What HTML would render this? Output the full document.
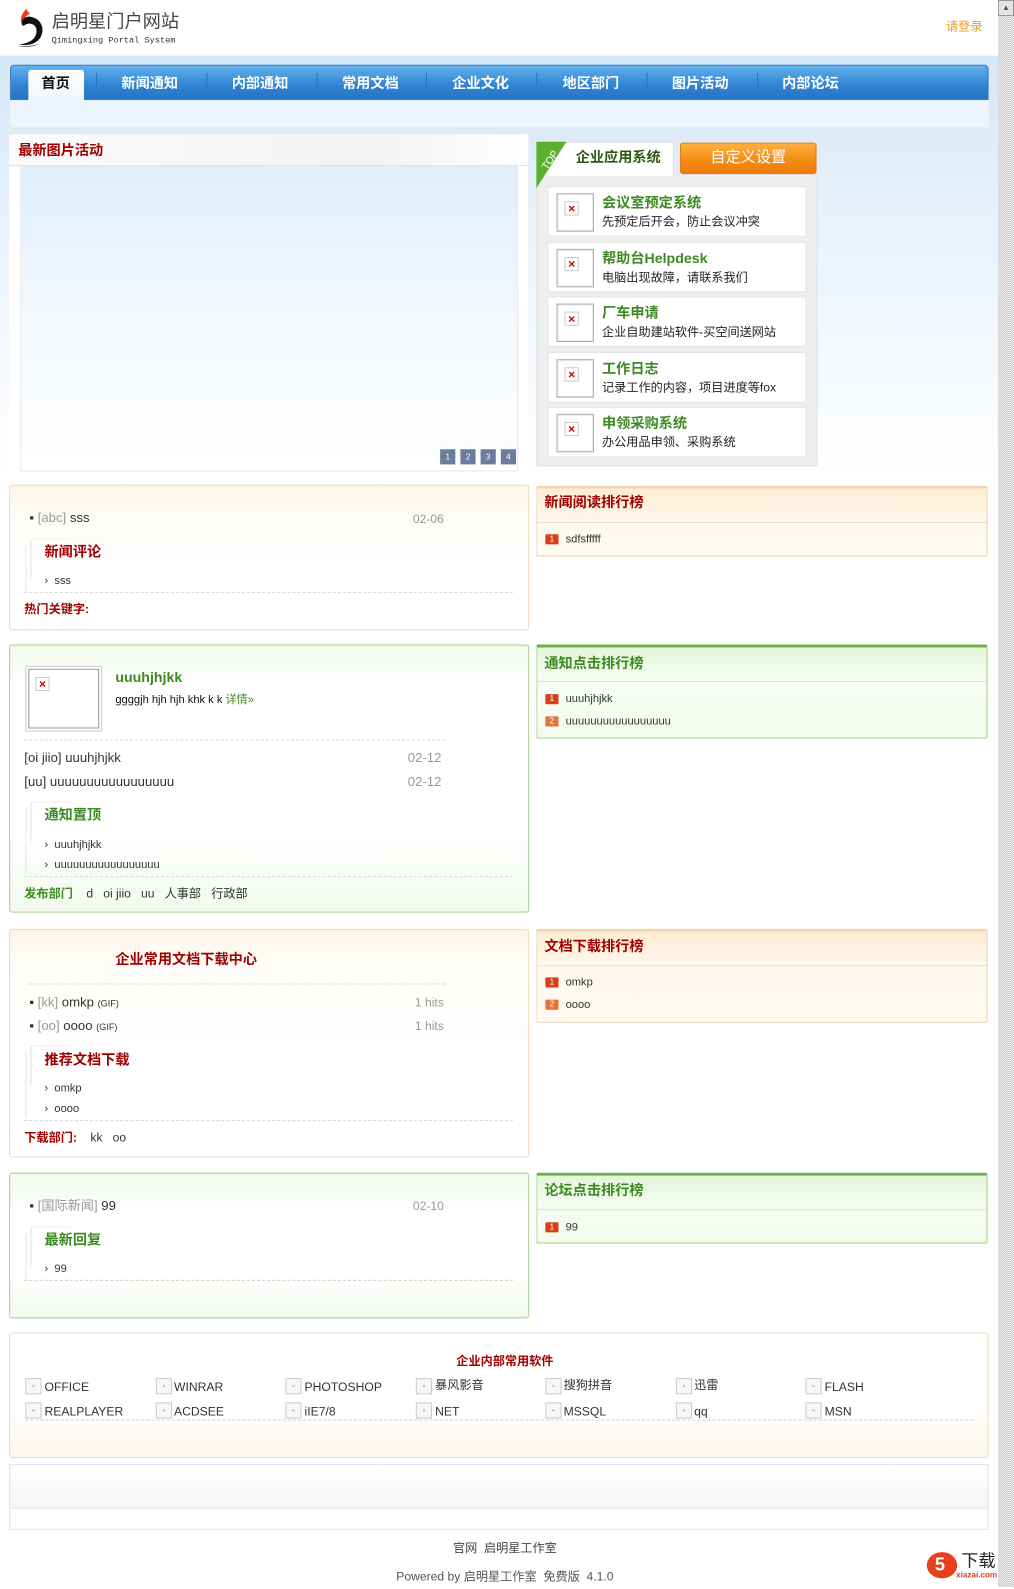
<!DOCTYPE html>
<html><head><meta charset="utf-8">
<style>
*{margin:0;padding:0;box-sizing:border-box}
body{width:1014px;height:1587px;position:relative;overflow:hidden;font-family:"Liberation Sans","Noto Sans CJK SC",sans-serif;font-size:12px;color:#333;background:#fff}
#w{position:absolute;left:0;top:0;width:1002px;height:1570px;transform:scale(1.0118);transform-origin:0 0}
.a{position:absolute;white-space:nowrap;line-height:16px}
.bg{position:absolute;left:0;top:55px;width:998px;height:420px;background:linear-gradient(#d6e7f6,#e8f2fb 40%,#fff)}
.nav{position:absolute;left:10px;top:64px;width:967px;height:35px;background:linear-gradient(#62b0ec,#2f83d2 60%,#2774c4);border-radius:4px 4px 0 0;border:1px solid #2a70b8}
.sub{position:absolute;left:10px;top:99px;width:967px;height:28px;background:#edf5fc;border-bottom:1px solid #d8e6f2}
.nv{position:absolute;top:73px;color:#fff;font-weight:bold;font-size:14px;transform:translateX(-50%);line-height:18px}
.sep{position:absolute;top:72px;width:1px;height:20px;background:#7ab8e8;border-right:1px solid #2a6cb0}
.box{position:absolute;border:1px solid;border-radius:3px}
.or{border-color:#efd9b8;background:linear-gradient(#fdf4e4,#fffdf9 30px,#fff 60%,#fff)}
.orb{border-color:#efd9b8;background:linear-gradient(#fff,#fff 60%,#fdf6ea)}
.gr{border-color:#a9d08f;background:linear-gradient(#f1f9ec,#fff 40px,#fff 70%,#f2faee)}
.red{color:#a00000;font-weight:bold}
.grn{color:#3d8a22;font-weight:bold}
.gray{color:#999}
.dash{position:absolute;height:0;border-top:1px dashed #d6d6d6}
.sb{position:absolute;border-left:1px solid #ddd;border-top:1px solid #eee;width:40px;height:40px;border-radius:4px 0 0 0}
.rk{position:absolute;left:530px;width:446px;border:1px solid;border-radius:2px}
.rko{border-color:#e6d2b4;border-top:3px solid #f2d7ad;background:linear-gradient(#fdecd2,#fff8ee 35px,#fff9f0)}
.rkg{border-color:#9fcc82;border-top:3px solid #6cb04c;background:linear-gradient(#e4f5da,#f8fdf5 35px,#f1fbec)}
.rkl{position:absolute;left:0;right:0;top:33px;border-top:1px solid #e2dcd0}
.num{position:absolute;width:13px;height:10px;background:#d8401a;color:#fff;font-size:8px;line-height:10px;text-align:center;border-radius:1px}
.n2{background:#e8733a}
.sw{position:absolute;width:16px;height:16px;border:1px solid #ccc;background:#f6f6f6}
.sw:after{content:"";position:absolute;left:6px;top:6px;width:2px;height:2px;background:#bbb}
.item{position:absolute;left:541px;width:256px;height:50px;background:#fff;border:1px solid #e2e2e2}
.img{position:absolute;left:8px;top:6px;width:37px;height:38px;border:1px solid #aaa;box-shadow:inset 0 0 0 1px #eee}
.x{position:absolute;width:14px;height:14px;border:1px solid #c8c8c8;color:#c00;font-size:12px;line-height:12px;text-align:center;font-weight:bold}
.it{position:absolute;left:53px;top:7px;font-size:14px;color:#3d8a22;font-weight:bold;line-height:16px}
.id{position:absolute;left:53px;top:26px;font-size:12px;color:#222;line-height:16px}
.pg{position:absolute;top:444px;width:15px;height:15px;background:#6c7c9c;color:#fff;font-size:8px;text-align:center;line-height:15px}
</style></head><body>
<div id="w">
<div class="bg"></div>
<svg class="a" style="left:13px;top:5px" width="36" height="44" viewBox="0 0 36 44">
<path d="M14 3 C8 8 6 14 9 20 C10 14 13 10 17 8 C14 7 13 5 14 3Z" fill="#e0401c"/>
<path d="M9 20 C7 13 14 10 19 12 C27 14 31 22 28 30 C25 38 15 41 6 39 C14 38 22 35 23 27 C24 20 18 17 13 19 C11 20 10 21 9 20Z" fill="#111"/>
<path d="M3 40 C10 42 20 42 26 38 C20 41 10 41 3 40Z" fill="#333"/>
</svg>
<div class="a" style="left:51px;top:11px;font-size:18px;line-height:20px;color:#444">启明星门户网站</div>
<div class="a" style="left:51px;top:35px;font-family:'Liberation Mono',monospace;font-size:8.5px;line-height:10px;color:#333">Qimingxing Portal System</div>
<div class="a" style="left:935px;top:18px;color:#e0a020;font-size:12px">请登录</div>
<div class="nav"></div>
<div class="sub"></div>
<div style="position:absolute;left:28px;top:69px;width:55px;height:31px;background:linear-gradient(#fff,#eef5fc);border-radius:3px 3px 0 0"></div>
<div class="nv" style="left:55px;color:#111">首页</div>
<div class="nv" style="left:148px">新闻通知</div>
<div class="nv" style="left:257px">内部通知</div>
<div class="nv" style="left:366px">常用文档</div>
<div class="nv" style="left:475px">企业文化</div>
<div class="nv" style="left:584px">地区部门</div>
<div class="nv" style="left:692px">图片活动</div>
<div class="nv" style="left:801px">内部论坛</div>
<div class="sep" style="left:95px"></div><div class="sep" style="left:204px"></div><div class="sep" style="left:313px"></div><div class="sep" style="left:421px"></div><div class="sep" style="left:530px"></div><div class="sep" style="left:639px"></div><div class="sep" style="left:748px"></div>
<div style="position:absolute;left:9px;top:133px;width:513px;height:334px;background:#fff"></div>
<div style="position:absolute;left:9px;top:133px;width:513px;height:31px;background:linear-gradient(90deg,#fbfbfb,#f2f2f2 70%,#fff);border-bottom:1px solid #dde3ea"></div>
<div class="a red" style="left:18px;top:139px;font-size:14px;line-height:18px">最新图片活动</div>
<div style="position:absolute;left:20px;top:164px;width:492px;height:302px;border:1px solid #e3e8ee;border-top:none;background:linear-gradient(#dfeefb,#f3f8fd 50%,#fff)"></div>
<div class="pg" style="left:435px">1</div><div class="pg" style="left:455px">2</div><div class="pg" style="left:475px">3</div><div class="pg" style="left:495px">4</div>
<div style="position:absolute;left:530px;top:172px;width:278px;height:289px;background:#eee;border:1px solid #e2e2e2"></div>
<div style="position:absolute;left:530px;top:140px;width:136px;height:34px;background:#fff;border:1px solid #ddd;border-bottom:none"></div>
<svg class="a" style="left:530px;top:140px" width="34" height="46"><polygon points="0,0 30,0 0,46" fill="#5cb030"/><text x="3" y="26" transform="rotate(-55 9 20)" fill="#fff" font-size="10" font-family="Liberation Sans">TOP</text></svg>
<div class="a" style="left:569px;top:146px;font-size:14px;line-height:18px;font-weight:bold;color:#2a5a10">企业应用系统</div>
<div style="position:absolute;left:672px;top:141px;width:135px;height:31px;border-radius:3px;background:linear-gradient(#fdb040,#f58a10 60%,#ef7a08);border:1px solid #e07808"></div>
<div class="a" style="left:672px;width:135px;text-align:center;top:147px;font-size:15px;line-height:18px;color:#fff">自定义设置</div>
<div class="item" style="top:184px"><div class="img"><div class="x" style="left:7px;top:7px">×</div></div><div class="it">会议室预定系统</div><div class="id">先预定后开会，防止会议冲突</div></div>
<div class="item" style="top:239px"><div class="img"><div class="x" style="left:7px;top:7px">×</div></div><div class="it">帮助台Helpdesk</div><div class="id">电脑出现故障，请联系我们</div></div>
<div class="item" style="top:293px"><div class="img"><div class="x" style="left:7px;top:7px">×</div></div><div class="it">厂车申请</div><div class="id">企业自助建站软件-买空间送网站</div></div>
<div class="item" style="top:348px"><div class="img"><div class="x" style="left:7px;top:7px">×</div></div><div class="it">工作日志</div><div class="id">记录工作的内容，项目进度等fox</div></div>
<div class="item" style="top:402px"><div class="img"><div class="x" style="left:7px;top:7px">×</div></div><div class="it">申领采购系统</div><div class="id">办公用品申领、采购系统</div></div>

<div class="box or" style="left:9px;top:479px;width:514px;height:144px"></div>
<div class="a" style="left:29px;top:504px;font-size:13px">▪ <span class="gray">[abc]</span> sss</div>
<div class="a gray" style="left:408px;top:505px">02-06</div>
<div class="sb" style="left:30px;top:532px"></div><div class="sb" style="left:25px;top:538px;height:46px;border-top:none"></div>
<div class="a red" style="left:44px;top:536px;font-size:14px;line-height:18px">新闻评论</div>
<div class="a" style="left:44px;top:566px;font-size:11px">› &nbsp;sss</div>
<div class="dash" style="left:24px;top:585px;width:483px"></div>
<div class="a red" style="left:24px;top:594px">热门关键字:</div>
<div class="rk rko" style="top:480px;height:70px"><div class="rkl"></div></div>
<div class="a red" style="left:538px;top:487px;font-size:14px;line-height:18px">新闻阅读排行榜</div>
<div class="num" style="left:539px;top:528px">1</div><div class="a" style="left:559px;top:525px;font-size:11px">sdfsfffff</div>

<div class="box gr" style="left:9px;top:637px;width:514px;height:265px"></div>
<div style="position:absolute;left:25px;top:658px;width:76px;height:65px;border:1px solid #ccc;padding:2px;background:#fff"><div style="width:100%;height:100%;border:1px solid #999"></div></div>
<div class="x" style="left:35px;top:669px">×</div>
<div class="a grn" style="left:114px;top:661px;font-size:14px">uuuhjhjkk</div>
<div class="a" style="left:114px;top:684px;font-size:11px;color:#111">ggggjh hjh hjh khk k k <span style="color:#3d8a22">详情»</span></div>
<div class="dash" style="left:24px;top:731px;width:416px"></div>
<div class="a" style="left:24px;top:741px;font-size:13px">[oi jiio] uuuhjhjkk</div><div class="a gray" style="left:403px;top:741px;font-size:13px">02-12</div>
<div class="a" style="left:24px;top:765px;font-size:13px">[uu] uuuuuuuuuuuuuuuuu</div><div class="a gray" style="left:403px;top:765px;font-size:13px">02-12</div>
<div class="sb" style="left:30px;top:792px"></div><div class="sb" style="left:25px;top:798px;height:66px;border-top:none"></div>
<div class="a grn" style="left:44px;top:796px;font-size:14px;line-height:18px">通知置顶</div>
<div class="a" style="left:44px;top:827px;font-size:11px">› &nbsp;uuuhjhjkk</div>
<div class="a" style="left:44px;top:847px;font-size:11px">› &nbsp;uuuuuuuuuuuuuuuuu</div>
<div class="dash" style="left:24px;top:866px;width:483px"></div>
<div class="a" style="left:24px;top:875px"><b style="color:#3d8a22">发布部门</b> &nbsp;&nbsp;&nbsp;d &nbsp;&nbsp;oi jiio &nbsp;&nbsp;uu &nbsp;&nbsp;人事部 &nbsp;&nbsp;行政部</div>
<div class="rk rkg" style="top:637px;height:93px"><div class="rkl"></div></div>
<div class="a grn" style="left:538px;top:646px;font-size:14px;line-height:18px">通知点击排行榜</div>
<div class="num" style="left:539px;top:686px">1</div><div class="a" style="left:559px;top:683px;font-size:11px">uuuhjhjkk</div>
<div class="num n2" style="left:539px;top:708px">2</div><div class="a" style="left:559px;top:705px;font-size:11px">uuuuuuuuuuuuuuuuu</div>

<div class="box or" style="left:9px;top:918px;width:514px;height:226px"></div>
<div class="a red" style="left:114px;top:939px;font-size:14px;line-height:18px">企业常用文档下载中心</div>
<div class="dash" style="left:28px;top:972px;width:412px"></div>
<div class="a" style="left:29px;top:983px;font-size:13px">▪ <span class="gray">[kk]</span> omkp <span style="font-size:9px">(GIF)</span></div><div class="a gray" style="left:410px;top:983px">1 hits</div>
<div class="a" style="left:29px;top:1006px;font-size:13px">▪ <span class="gray">[oo]</span> oooo <span style="font-size:9px">(GIF)</span></div><div class="a gray" style="left:410px;top:1006px">1 hits</div>
<div class="sb" style="left:30px;top:1033px"></div><div class="sb" style="left:25px;top:1039px;height:66px;border-top:none"></div>
<div class="a red" style="left:44px;top:1038px;font-size:14px;line-height:18px">推荐文档下载</div>
<div class="a" style="left:44px;top:1068px;font-size:11px">› &nbsp;omkp</div>
<div class="a" style="left:44px;top:1088px;font-size:11px">› &nbsp;oooo</div>
<div class="dash" style="left:24px;top:1107px;width:483px"></div>
<div class="a" style="left:24px;top:1116px"><b style="color:#a00000">下载部门:</b> &nbsp;&nbsp;&nbsp;kk &nbsp;&nbsp;oo</div>
<div class="rk rko" style="top:918px;height:93px"><div class="rkl"></div></div>
<div class="a red" style="left:538px;top:926px;font-size:14px;line-height:18px">文档下载排行榜</div>
<div class="num" style="left:539px;top:966px">1</div><div class="a" style="left:559px;top:963px;font-size:11px">omkp</div>
<div class="num n2" style="left:539px;top:988px">2</div><div class="a" style="left:559px;top:985px;font-size:11px">oooo</div>

<div class="box gr" style="left:9px;top:1159px;width:514px;height:144px"></div>
<div class="a" style="left:29px;top:1184px;font-size:13px">▪ <span class="gray">[国际新闻]</span> 99</div><div class="a gray" style="left:408px;top:1184px">02-10</div>
<div class="sb" style="left:30px;top:1212px"></div><div class="sb" style="left:25px;top:1218px;height:46px;border-top:none"></div>
<div class="a grn" style="left:44px;top:1216px;font-size:14px;line-height:18px">最新回复</div>
<div class="a" style="left:44px;top:1246px;font-size:11px">› &nbsp;99</div>
<div class="dash" style="left:24px;top:1265px;width:483px"></div>
<div class="rk rkg" style="top:1159px;height:70px"><div class="rkl"></div></div>
<div class="a grn" style="left:538px;top:1167px;font-size:14px;line-height:18px">论坛点击排行榜</div>
<div class="num" style="left:539px;top:1208px">1</div><div class="a" style="left:559px;top:1205px;font-size:11px">99</div>

<div class="box orb" style="left:9px;top:1317px;width:968px;height:124px"></div>
<div class="a red" style="left:0;width:998px;text-align:center;top:1337px">企业内部常用软件</div>
<div class="sw" style="left:25px;top:1362px"></div><div class="a" style="left:44px;top:1363px">OFFICE</div>
<div class="sw" style="left:154px;top:1362px"></div><div class="a" style="left:172px;top:1363px">WINRAR</div>
<div class="sw" style="left:282px;top:1362px"></div><div class="a" style="left:301px;top:1363px">PHOTOSHOP</div>
<div class="sw" style="left:411px;top:1362px"></div><div class="a" style="left:430px;top:1361px">暴风影音</div>
<div class="sw" style="left:539px;top:1362px"></div><div class="a" style="left:557px;top:1361px">搜狗拼音</div>
<div class="sw" style="left:668px;top:1362px"></div><div class="a" style="left:686px;top:1361px">迅雷</div>
<div class="sw" style="left:796px;top:1362px"></div><div class="a" style="left:815px;top:1363px">FLASH</div>
<div class="sw" style="left:25px;top:1386px"></div><div class="a" style="left:44px;top:1387px">REALPLAYER</div>
<div class="sw" style="left:154px;top:1386px"></div><div class="a" style="left:172px;top:1387px">ACDSEE</div>
<div class="sw" style="left:282px;top:1386px"></div><div class="a" style="left:301px;top:1387px">iIE7/8</div>
<div class="sw" style="left:411px;top:1386px"></div><div class="a" style="left:430px;top:1387px">NET</div>
<div class="sw" style="left:539px;top:1386px"></div><div class="a" style="left:557px;top:1387px">MSSQL</div>
<div class="sw" style="left:668px;top:1386px"></div><div class="a" style="left:686px;top:1387px">qq</div>
<div class="sw" style="left:796px;top:1386px"></div><div class="a" style="left:815px;top:1387px">MSN</div>
<div class="dash" style="left:25px;top:1403px;width:937px"></div>

<div style="position:absolute;left:9px;top:1447px;width:968px;height:65px;border:1px solid #dde2ea;background:linear-gradient(#fff,#f4f5f7 42px,#fff 43px)"></div>
<div style="position:absolute;left:10px;top:1490px;width:966px;border-top:1px solid #dde2ea"></div>

<div class="a" style="left:0;width:998px;text-align:center;top:1522px;color:#444">官网 &nbsp;启明星工作室</div>
<div class="a" style="left:0;width:998px;text-align:center;top:1550px;color:#555">Powered by 启明星工作室 &nbsp;免费版 &nbsp;4.1.0</div>
<div class="a" style="left:916px;top:1534px;width:30px;height:26px;border-radius:50%;background:#e8401c"></div>
<div class="a" style="left:924px;top:1536px;color:#fff;font-weight:bold;font-size:18px;line-height:20px">5</div>
<div class="a" style="left:950px;top:1534px;font-size:17px;line-height:18px;color:#222">下载</div>
<div class="a" style="left:945px;top:1552px;font-size:8px;line-height:9px;color:#e8401c;font-weight:bold">xiazai.com</div>
</div>
<div style="position:absolute;left:998px;top:0;width:16px;height:1587px;background:repeating-conic-gradient(#c8c8c8 0 25%,#f0f0f0 0 50%) 0 0/2px 2px"></div>
<div style="position:absolute;left:998px;top:0;width:16px;height:16px;background:#e4e4e4;border:1px solid #999;color:#555;font-size:8px;text-align:center;line-height:14px">▲</div>
</body></html>
